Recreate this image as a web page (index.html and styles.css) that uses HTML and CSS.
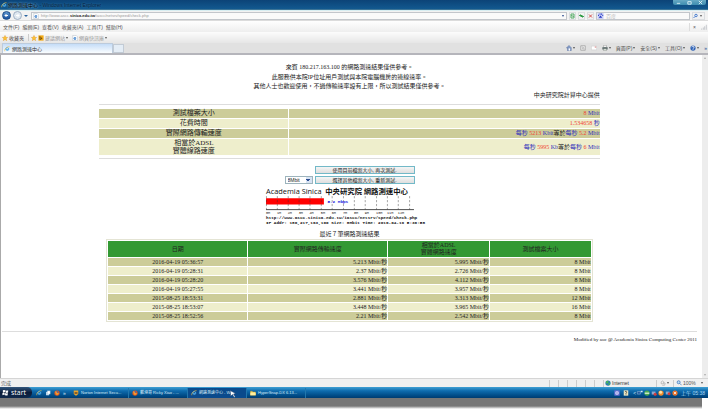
FILE: index.html
```html
<!DOCTYPE html>
<html lang="zh-Hant">

<head>
    <title>網路測速中心</title>
    <meta charset="utf-8">
    <meta name="viewport" content="width=device-width, initial-scale=1.0">
    <link rel="stylesheet" href="styles.css">
</head>

<body>
    <svg class="defs" aria-hidden="true">
        <symbol id="ie" viewBox="0 0 16 16">
            <path d="M13 9H5q1 3 4 3 2 0 3-1" fill="none" stroke="#4fabea" stroke-width="2.4" />
            <path d="M4 9q0-5 4.500-5Q13 4 13 9" fill="none" stroke="#4fabea" stroke-width="2.400" />
            <path d="M2 14Q0 10 6 5t9-3" fill="none" stroke="#f0c040" stroke-width="1.600" />
        </symbol>
        <symbol id="page" viewBox="0 0 16 16">
            <path d="M2 1h9l4 4v10H2z" fill="#fff" stroke="#9aa7b5" />
            <path d="M10 10H5q0-4 3-4t2 4M5 10q1 3 5 2" fill="none" stroke="#2f78c8" stroke-width="2" />
        </symbol>
        <symbol id="star" viewBox="0 0 16 16">
            <path d="M8 1l2 5 5 .5-4 3.500 1.500 5L8 12l-4.500 3L5 10 1 6.500 6 6z" fill="#ffc530" stroke="#d98a1a" />
        </symbol>
        <symbol id="firefox" viewBox="0 0 16 16">
            <circle cx="8" cy="8" r="7" fill="#e2541b" />
            <circle cx="8" cy="7" r="3.500" fill="#3d66b5" />
            <path d="M3 4q4-2 5 3l5 1q-1 5-5 5T3 4" fill="#f79a2c" />
        </symbol>
        <symbol id="folder" viewBox="0 0 16 16">
            <path d="M1 3h5l2 2h7v9H1z" fill="#f4d35c" stroke="#c79a2a" />
            <path d="M1 7h14v7H1z" fill="#fff0a0" />
        </symbol>
        <symbol id="bars" viewBox="0 0 16 16">
            <path d="M1 12h2v3H1zM5 9h2v6H5zM9 6h2v9H9zM13 2h2v13h-2z" fill="#b9bdc2" />
        </symbol>
    </svg>

    <div class="window">
        <header class="titlebar">
            <svg class="icon"><use href="#ie" /></svg>
            <span class="title">網路測速中心 <span class="app">- Windows Internet Explorer</span></span>
            <div class="controls">
                <button aria-label="最小化"><svg viewBox="0 0 10 6"><path d="M3 4h4" /></svg></button>
                <button aria-label="還原"><svg viewBox="0 0 10 6"><path d="M3 2h4v3H3z" /></svg></button>
                <button aria-label="關閉"><svg viewBox="0 0 10 6"><path d="M3 1l4 4M7 1L3 5" /></svg></button>
            </div>
        </header>

        <div class="addressbar">
            <button class="round back" aria-label="上一頁"><svg viewBox="0 0 10 10"><path d="M8 5H2M5 2L2 5l3 3" /></svg></button>
            <button class="round" aria-label="下一頁"><svg viewBox="0 0 10 10"><path d="M2 5h6M5 2l3 3-3 3" /></svg></button>
            <span class="caret big"></span>
            <div class="field address">
                <svg class="icon"><use href="#page" /></svg>
                <div class="url" role="textbox" aria-label="網址" contenteditable="true">http://www.ascc.<b>sinica.edu.tw</b>/iascc/netsrv/speed/check.php</div>
                <span class="caret"></span>
            </div>
            <button class="tool" aria-label="相容性檢視"><svg viewBox="0 0 10 10"><path d="M2 1h6v8H2zM2 4l6 2" stroke="#58ad6b" /></svg></button>
            <button class="tool" aria-label="重新整理"><svg viewBox="0 0 10 10"><path d="M1 4h5M3 2L1 4l2 2M4 6h5M7 4l2 2-2 2" stroke="#2e9b45" /></svg></button>
            <button class="tool" aria-label="停止"><svg viewBox="0 0 10 10"><path d="M2 2l6 6M8 2L2 8" stroke="#d45050" /></svg></button>
            <div class="field search">
                <svg class="paw" viewBox="0 0 10 10"><path d="M0 0h10v10H0z" fill="#c9cff5" /><path d="M5 4l3 4H2zM1 3h1.500v2H1zM3.500 1H5v2H3.500zM6 1h1.500v2H6zM8 3h1.500v2H8z" fill="#2638c4" /></svg>
                <input type="text" placeholder="百度" aria-label="搜尋">
            </div>
            <button class="tool go" aria-label="開始搜尋"><svg viewBox="0 0 10 10"><circle cx="6" cy="4" r="2.500" stroke="#4a7fd0" /><path d="M4 6L1 9" stroke="#4a7fd0" /></svg><span class="caret"></span></button>
        </div>

        <nav class="menubar">
            <a href="#">文件(F)</a>
            <a href="#">編輯(E)</a>
            <a href="#">查看(V)</a>
            <a href="#">收藏夾(A)</a>
            <a href="#">工具(T)</a>
            <a href="#">幫助(H)</a>
            <span class="menu-end">
                <button aria-label="關閉工具列">×</button>
                <svg class="icon"><use href="#bars" /></svg>
            </span>
        </nav>

        <nav class="favorites">
            <svg class="icon"><use href="#star" /></svg>
            <a class="dark" href="#">收藏夾</a>
            <span class="divider"></span>
            <svg class="icon"><use href="#star" /></svg>
            <svg class="icon" viewBox="0 0 16 16"><path d="M1 1h14v14H1z" fill="#f3ab16" /><path d="M5 3v9l6-3-4-2" fill="none" stroke="#50370a" stroke-width="2" /></svg>
            <a href="#">建議網站</a><span class="caret"></span>
            <svg class="icon second"><use href="#page" /></svg>
            <a href="#">網頁快訊庫</a><span class="caret"></span>
        </nav>

        <div class="tabbar">
            <a class="tab" href="#"><svg class="icon"><use href="#ie" /></svg>網路測速中心</a>
            <button class="newtab" aria-label="新索引標籤"></button>
            <div class="commands">
                <button aria-label="首頁"><svg class="icon" viewBox="0 0 16 16"><path d="M1 8l7-7 6 6v8H4V8z" fill="#8199c4" stroke="#415c91" /><path d="M7 9h4v6H7z" fill="#fff" /></svg><span class="caret"></span></button>
                <button aria-label="摘要"><svg class="icon" viewBox="0 0 16 16"><path d="M2 2h12v12H2z" fill="#eee" stroke="#888" stroke-width="1.500" /><path d="M5 5q6 0 6 7M5 8q3 0 3 4" fill="none" stroke="#999" stroke-width="1.500" /></svg></button>
                <button aria-label="郵件"><svg class="icon" viewBox="0 0 16 16"><path d="M1 3h14v10H1z" fill="#fff" stroke="#bbb" /><path d="M10 4h4v3h-4z" fill="#dd8c8c" /></svg></button>
                <button aria-label="列印"><svg class="icon" viewBox="0 0 16 16"><path d="M4 1h8v5H4z" fill="#fff" stroke="#777" /><path d="M1 6h14v6H1z" fill="#566" /><path d="M4 10h8v5H4z" fill="#dde8dd" stroke="#777" /></svg><span class="caret"></span></button>
                <button>頁面(P)<span class="caret"></span></button>
                <button>安全(S)<span class="caret"></span></button>
                <button>工具(O)<span class="caret"></span></button>
                <button aria-label="說明"><svg class="icon" viewBox="0 0 16 16"><circle cx="8" cy="8" r="7" fill="#2f62b5" /><path d="M5 6q0-3 3-3t3 3q0 2-3 3v1M8 11v2" fill="none" stroke="#fff" stroke-width="2" /></svg><span class="caret"></span></button>
                <button class="more" aria-label="更多">»</button>
            </div>
        </div>

        <div class="viewport">
            <main class="page">
                <p class="lead">來賓 180.217.163.100 的網路測速結果僅供參考。</p>
                <p>此服務供本院IP位址用戶測試與本院電腦機房的連線速率。</p>
                <p>其他人士也歡迎使用，不過傳輸速率設有上限，所以測試結果僅供參考。</p>
                <div class="result">
                    <p class="provider">中央研究院計算中心提供</p>
                    <hr>
                    <table class="summary">
                        <tr><th>測試檔案大小</th><td><em>8</em> Mbit</td></tr>
                        <tr><th>花費時間</th><td><em>1.534658</em> 秒</td></tr>
                        <tr><th>實際網路傳輸速度</th><td>每秒 <em>5213</em> Kbit<i>等於</i>每秒 <em>5.2</em> Mbit</td></tr>
                        <tr><th>相當於ADSL<br>實體線路速度</th><td>每秒 <em>5995</em> Kb<i>等於</i>每秒 <em>6</em> Mbit</td></tr>
                    </table>
                    <hr>
                </div>

                <form class="retest">
                    <button type="button" class="again">使用目前檔案大小, 再次測試.</button>
                    <select aria-label="檔案大小">
                        <option>8Mbit</option>
                        <option>12Mbit</option>
                        <option>16Mbit</option>
                    </select>
                    <button type="button">選擇其他檔案大小, 重新測試.</button>
                </form>

                <svg class="chart" viewBox="0 0 386 90">
                    <text class="chart-title" x="0" y="17">Academia Sinica</text>
                    <text class="chart-name" x="136" y="17">中央研究院 網路測速中心</text>
                    <path d="M0 26h133v14H0z" fill="#f00" />
                    <path class="ticks" d="M1 21v31M26 21v31M51 21v31M76 21v31M101 21v31M127 21v31M152 21v31M178 21v31M203 21v31M228 21v31M254 21v31M279 21v31M304 21v31M330 21v31" />
                    <path d="M0 52h340" stroke="#333" stroke-width="2" />
                    <text class="speed" x="141" y="37">5.2 Mbps</text>
                    <g class="scale">
                        <text x="0" y="62">0M</text>
                        <text x="25" y="62">1M</text>
                        <text x="50" y="62">2M</text>
                        <text x="75" y="62">3M</text>
                        <text x="100" y="62">4M</text>
                        <text x="126" y="62">5M</text>
                        <text x="151" y="62">6M</text>
                        <text x="177" y="62">7M</text>
                        <text x="202" y="62">8M</text>
                        <text x="227" y="62">9M</text>
                        <text x="253" y="62">10M</text>
                        <text x="278" y="62">11M</text>
                        <text x="303" y="62">12M</text>
                    </g>
                    <text class="mono" x="0" y="73">http://www.ascc.sinica.edu.tw/iascc/netsrv/speed/check.php</text>
                    <text class="mono" x="0" y="84">IP Addr: 180,217,163,100 Size: 8Mbit Time: 2016-04-19 5:36:58</text>
                </svg>

                <table class="history">
                    <caption>最近７筆網路測速結果</caption>
                    <thead>
                        <tr><th class="date">日期</th><th class="real">實際網路傳輸速度</th><th class="adsl">相當於ADSL<br>實體網路速度</th><th>測試檔案大小</th></tr>
                    </thead>
                    <tbody>
                        <tr><td>2016-04-19 05:36:57</td><td>5.213 Mbit/秒</td><td>5.995 Mbit/秒</td><td>8 Mbit</td></tr>
                        <tr><td>2016-04-19 05:28:31</td><td>2.37 Mbit/秒</td><td>2.726 Mbit/秒</td><td>8 Mbit</td></tr>
                        <tr><td>2016-04-19 05:28:20</td><td>3.576 Mbit/秒</td><td>4.112 Mbit/秒</td><td>8 Mbit</td></tr>
                        <tr><td>2016-04-19 05:27:55</td><td>3.441 Mbit/秒</td><td>3.957 Mbit/秒</td><td>8 Mbit</td></tr>
                        <tr><td>2015-08-25 18:53:31</td><td>2.881 Mbit/秒</td><td>3.313 Mbit/秒</td><td>12 Mbit</td></tr>
                        <tr><td>2015-08-25 18:53:07</td><td>3.448 Mbit/秒</td><td>3.965 Mbit/秒</td><td>16 Mbit</td></tr>
                        <tr><td>2015-08-25 18:52:56</td><td>2.21 Mbit/秒</td><td>2.542 Mbit/秒</td><td>8 Mbit</td></tr>
                    </tbody>
                </table>
                <hr class="end">
                <p class="footer">Modified by aoc @ Academia Sinica Computing Center 2011</p>
            </main>
            <div class="scrollbar"><span class="caret up"></span><span class="caret"></span></div>
        </div>

        <div class="statusbar">
            <span class="done">完成</span>
            <span class="cell"></span><span class="cell"></span><span class="cell"></span><span class="cell"></span><span class="cell"></span><span class="cell"></span>
            <span class="cell zone"><svg class="icon" viewBox="0 0 16 16"><circle cx="8" cy="8" r="7" fill="#2d7fb0" /><path d="M3 4q4-4 6 0t-3 5-3-5M10 8q4-1 4 2t-5 4z" fill="#49b45a" /></svg>Internet</span>
            <span class="cell guard"><svg class="icon" viewBox="0 0 16 16"><path d="M3 5q4-5 7 0v5H3zM10 7l4 2-2 5H6" fill="#eee" stroke="#777" /></svg><span class="caret"></span></span>
            <span class="cell zoom"><svg class="icon" viewBox="0 0 16 16"><circle cx="7" cy="6" r="4" fill="#bfe0f5" stroke="#3d72b8" stroke-width="2" /><path d="M10 9l5 5" stroke="#3d72b8" stroke-width="2" /></svg>100%<span class="caret"></span></span>
        </div>

        <footer class="taskbar">
            <button class="start"><svg class="flag" viewBox="0 0 16 16"><path d="M2 3q3-2 5 0v5q-2-2-5 0zM8 3q3 2 6 0v5q-3 2-6 0zM1 9q3-2 5 0v5q-2-2-5 0zM7 9q3 2 6 0v5q-3 2-6 0z" fill="#fff" /></svg>start</button>
            <div class="quick">
                <svg class="icon"><use href="#ie" /></svg>
                <svg class="icon" viewBox="0 0 16 16"><path d="M3 5h8v9H3z" fill="#dcecf8" /><path d="M6 2h8v9H6z" fill="#fff" stroke="#6a9dc5" /></svg>
                <svg class="icon"><use href="#firefox" /></svg>
                <span>»</span>
            </div>
            <button class="task"><svg class="icon" viewBox="0 0 16 16"><path d="M2 1h12v8q-1 4-6 6-5-2-6-6z" fill="#e8a32c" /><path d="M4 6h8v4H4z" fill="#634a32" /></svg>Norton Internet Secu...</button>
            <button class="task"><svg class="icon"><use href="#firefox" /></svg>戴港哥 Ricky Xiao - ...</button>
            <button class="task active"><svg class="icon"><use href="#ie" /></svg>網路測速中心 - Wi...</button>
            <button class="task"><svg class="icon"><use href="#folder" /></svg>HyperSnap-DX 6.13...</button>
            <svg class="cursor" viewBox="0 0 14 14"><path d="M2 1l10 5-4 1 3 5-2 1-3-5-3 3z" fill="#fff" stroke="#163d70" /></svg>
            <div class="tray">
                <svg class="icon" viewBox="0 0 16 16"><path d="M1 1h14v14H1z" fill="#6f70d8" /><path d="M5 11V5h6v6z" fill="none" stroke="#fff" stroke-width="2" /></svg>
                <svg class="icon help" viewBox="0 0 16 16"><path d="M2 1h12v14H2z" fill="#eee8c0" /><path d="M5 5q3-3 5 0 0 2-2 4v3" fill="none" stroke="#333" stroke-width="2" /></svg>
                <span>&lt;</span>
                <svg class="icon" viewBox="0 0 16 16"><path d="M1 4h8v7H1z" fill="#235ba0" stroke="#c9ddf0" /><path d="M10 2h5v4h-5z" fill="#dbe8f5" /></svg>
                <svg class="icon" viewBox="0 0 16 16"><circle cx="8" cy="8" r="7" fill="#4cab50" /><path d="M2 7h12v3H2z" fill="#eef8ee" /></svg>
                <svg class="icon" viewBox="0 0 16 16"><path d="M2 4h10v8H2z" fill="#8da7cc" /><circle cx="11" cy="11" r="4" fill="#d43c3c" /></svg>
                <svg class="icon" viewBox="0 0 16 16"><circle cx="8" cy="8" r="7" fill="#f08a2a" /><circle cx="7" cy="6" r="4" fill="#ffe3a6" /></svg>
                <svg class="icon" viewBox="0 0 16 16"><path d="M2 4h10v8H2z" fill="#8da7cc" /><circle cx="11" cy="10" r="4" fill="#d43c3c" /></svg>
                <svg class="icon" viewBox="0 0 16 16"><circle cx="8" cy="8" r="7" fill="#ee7428" /><path d="M5 5l6 6M11 5l-6 6" stroke="#fff" stroke-width="2" /></svg>
                <time>上午 05:38</time>
            </div>
        </footer>
    </div>
    <div class="shadow"></div>
</body>

</html>
```
FILE: styles.css
```css
* {
    box-sizing: border-box;
}

body {
    display: flex;
    flex-direction: column;
    min-height: 100vh;
    margin: 0;
    background: #fff;
    font-family: "Liberation Sans", "Noto Sans CJK TC", sans-serif;
    font-size: 5px;
    line-height: 8px;
    color: #555;
}

button,
input,
select {
    margin: 0;
    padding: 0;
    border: 0;
    background: none;
    font: inherit;
    color: inherit;
}

a {
    color: inherit;
    text-decoration: none;
}

p {
    margin: 0;
}

.defs {
    position: absolute;
    width: 0;
    height: 0;
}

.icon {
    flex: none;
    width: 6px;
    height: 6px;
}

.caret {
    flex: none;
    border: 1px solid transparent;
    border-top: 2px solid #555;
    border-bottom: 0;
}

.caret.big {
    border-width: 2px 2px 0;
    border-top-color: #2b65a0;
}

.window {
    display: flex;
    flex: 1;
    flex-direction: column;
    margin-right: 12px;
}

/* title */
.titlebar {
    display: flex;
    align-items: center;
    gap: 1px;
    height: 10px;
    padding-left: 1px;
    background: linear-gradient(#0c4377, #12598f);
    border-bottom: 1px solid #3d7496;
}

.title {
    font-size: 5px;
    color: #000;
    text-shadow: 0 0 2px #7fb4da, 0 0 3px #5b97c4;
}

.app {
    color: #04203c;
    text-shadow: 0 0 2px #4683b0;
}

.controls {
    display: flex;
    align-self: flex-start;
    margin-left: auto;
    margin-right: 2px;
    border-radius: 0 0 2px 2px;
    background: linear-gradient(#67a9c4, #3e8db0);
}

.controls button {
    display: flex;
    width: 11px;
    height: 5px;
}

.controls svg {
    width: 100%;
    height: 5px;
    fill: none;
    stroke: #e8f5fb;
}

/* address */
.addressbar {
    display: flex;
    align-items: center;
    gap: 2px;
    height: 11px;
    padding: 0 3px 0 2px;
    background: #f2f2f2;
    border-top: 1px solid #d8eef2;
    border-bottom: 1px solid #dcdcdc;
}

.round {
    display: flex;
    width: 9px;
    height: 9px;
    padding: 1px;
    border: 1px solid #9fb0c4;
    border-radius: 50%;
    background: #dfe8f0;
}

.round svg {
    width: 100%;
    fill: none;
    stroke: #fff;
    stroke-width: 2;
}

.round.back {
    border-color: #1c4c88;
    background: linear-gradient(#5f97d0, #164f9e);
}

.field {
    display: flex;
    align-items: center;
    gap: 2px;
    height: 8px;
    border: 1px solid #c2c6cb;
    background: #fafafa;
}

.address {
    flex: 1;
    margin-left: 1px;
    padding: 0 2px 0 1px;
}

.address .caret {
    border-top-color: #2b4c90;
}

.url {
    flex: 1;
    font-size: 4px;
    line-height: 6px;
    color: #999;
}

.url b {
    color: #222;
}

.tool {
    display: flex;
    align-items: center;
    gap: 2px;
    width: 7px;
    height: 8px;
    border: 1px solid #dadde0;
}

.tool svg {
    width: 5px;
    height: 6px;
    fill: none;
    stroke-width: 2;
}

.search {
    width: 94px;
}

.paw {
    width: 7px;
    height: 6px;
}

.search input {
    flex: 1;
    width: 0;
    height: 6px;
}

.search input::placeholder {
    color: #bbb;
}

.go {
    width: 13px;
}

/* menu */
.menubar {
    display: flex;
    align-items: center;
    gap: 3px;
    height: 11px;
    padding-left: 3px;
    background: linear-gradient(#fff, #eee);
}

.menu-end {
    display: flex;
    align-items: center;
    gap: 5px;
    margin-left: auto;
    padding: 0 1px 0 3px;
    border-left: 1px solid #ddd;
}

.favorites {
    display: flex;
    align-items: center;
    gap: 1px;
    height: 11px;
    padding-left: 2px;
    background: linear-gradient(#fcfcfc, #e6e6e6);
    color: #999;
}

.favorites .dark {
    color: #444;
}

.divider {
    height: 7px;
    margin: 0 1px 0 3px;
    border-left: 1px solid #ccc;
}

.second {
    margin-left: 3px;
}

.tabbar {
    display: flex;
    align-items: center;
    height: 12px;
    padding-left: 2px;
    background: #e1e1e1;
    border-bottom: 2px solid #b5b5bb;
}

.tab {
    display: flex;
    align-items: center;
    gap: 2px;
    width: 111px;
    height: 10px;
    padding-left: 1px;
    border: 1px solid #bccbdc;
    border-bottom: 0;
    background: linear-gradient(#c5ddf8, #fafdff);
    color: #333;
}

.newtab {
    align-self: flex-end;
    width: 11px;
    height: 9px;
    border: 1px solid #c2cbd5;
    background: #e4edf6;
}

.commands {
    display: flex;
    align-items: center;
    gap: 5px;
    margin-left: auto;
    padding-right: 1px;
}

.commands button {
    display: flex;
    align-items: center;
    gap: 1px;
}

.more {
    color: #2b4c90;
}

/* content */
.viewport {
    display: flex;
    flex: 1;
    background: #fff;
}

.page {
    flex: 1;
    padding: 8px 5px 0 1px;
    border-left: 1px solid #aaa;
    font-family: "Liberation Serif", "Noto Sans CJK TC", serif;
    font-size: 6px;
    line-height: 9px;
    text-align: center;
    color: #222;
}

.page .lead {
    padding-bottom: 1px;
}

.scrollbar {
    display: flex;
    flex-direction: column;
    justify-content: space-between;
    align-items: center;
    width: 6px;
    padding: 2px 0;
    background: #ededed;
}

.scrollbar .caret {
    border-top-color: #aaa;
}

.scrollbar .up {
    rotate: 180deg;
}

hr {
    height: 1px;
    margin: 0;
    border: 0;
    background: #ddd;
}

.result {
    width: 72%;
    margin: 0 auto;
}

.provider {
    padding-bottom: 4px;
    text-align: right;
}

.summary {
    width: 100%;
    margin: 3px 0 2px;
    border-spacing: 0 1px;
    line-height: 9px;
}

.summary th,
.summary td {
    padding: 0;
    background: #cccc99;
}

.summary th {
    width: 38%;
    border-right: 1px solid #fff;
    font-size: 7px;
    font-weight: normal;
}

.summary tr:nth-child(even) > * {
    background: #eeeecc;
}

.summary tr:last-child th {
    line-height: 8px;
}

.summary td {
    text-align: right;
    color: #33b;
}

.summary em {
    font-style: normal;
    color: #e43;
}

.summary i {
    font-style: normal;
    color: #222;
}

.retest {
    display: grid;
    grid-template-columns: 28px 100px;
    justify-content: center;
    gap: 2px;
    margin: 7px 0 3px;
}

.retest button,
.retest select {
    height: 8px;
    border: 1px solid #9db4bd;
    background: #eee;
    font-family: "Liberation Sans", "Noto Sans CJK TC", sans-serif;
    font-size: 5px;
    line-height: 6px;
    color: #222;
}

.retest button {
    border-color: #72b9c8;
    background: linear-gradient(#f5f5f5, #dedede);
}

.again {
    grid-column: 2;
}

.retest select {
    appearance: none;
    padding-left: 2px;
    background: conic-gradient(from -45deg at 50% 100%, #2b4c90 90deg, transparent 0) right 2px top 2px / 4px 2px no-repeat, linear-gradient(to right, #fff 20px, #d7e3f3 20px);
}

.chart {
    display: block;
    width: 168px;
    margin: 0 auto;
    overflow: visible;
    fill: #111;
}

.chart-title {
    font: 17px "Open Sans", sans-serif;
}

.chart-name {
    font: bold 17px "Noto Sans CJK TC", sans-serif;
}

.ticks {
    fill: none;
    stroke: #333;
    stroke-width: 1;
    stroke-dasharray: 5 4;
}

.speed,
.mono {
    font: bold 10px "Liberation Mono", monospace;
}

.speed {
    fill: #22d;
}

.scale {
    font: 8px "Liberation Mono", monospace;
}

.history {
    width: 70%;
    margin: 4px auto 0;
    border: 1px solid #e4e4d4;
    border-spacing: 1px;
    table-layout: fixed;
    line-height: 8px;
}

.history caption {
    padding-bottom: 1px;
}

.history th,
.history td {
    padding: 0;
}

.history th {
    height: 16px;
    background: #339933;
    font-weight: normal;
    line-height: 7px;
}

.date {
    width: 29%;
}

.real {
    width: 29%;
}

.adsl {
    width: 21%;
}

.history td {
    background: #eeeecc;
    text-align: right;
}

.history tr:nth-child(odd) td {
    background: #cccc99;
}

.history .date,
.history .real,
.history .adsl,
.history tr th {
    background: #339933;
}

.history td:first-child {
    text-align: center;
}

.end {
    margin: 9px 0 3px;
}

.footer {
    font-size: 5px;
    text-align: right;
}

/* status and task bar */
.statusbar {
    display: flex;
    align-items: center;
    height: 9px;
    padding-left: 1px;
    background: #f0f0f0;
    border-top: 1px solid #d5d5d5;
}

.done {
    flex: 1;
}

.cell {
    display: flex;
    align-items: center;
    gap: 1px;
    width: 9px;
    height: 7px;
    padding-left: 1px;
    border-left: 1px solid #ccc;
}

.zone {
    width: 53px;
    color: #333;
}

.guard {
    width: 17px;
    padding-left: 3px;
}

.zoom {
    width: 35px;
    padding-left: 2px;
}

.zoom .caret {
    margin-left: 4px;
}

.taskbar {
    display: flex;
    align-items: center;
    height: 11px;
    background: linear-gradient(#3fa0d4, #0f6cae 35%, #004a85 80%, #003c70);
    color: #d9ecf8;
}

.start {
    display: flex;
    align-items: center;
    gap: 2px;
    width: 32px;
    height: 11px;
    padding-left: 2px;
    border-radius: 0 5px 5px 0;
    background: linear-gradient(#33567d, #0a1c3a 50%, #10294c);
    font-family: "Open Sans", sans-serif;
    font-size: 7px;
    color: #fff;
}

.flag {
    width: 7px;
    height: 7px;
}

.quick {
    display: flex;
    gap: 3px;
    width: 38px;
    padding-left: 4px;
    align-items: center;
}

.quick span {
    line-height: 6px;
}

.task {
    display: flex;
    align-items: center;
    gap: 2px;
    width: 59px;
    height: 10px;
    padding-left: 3px;
    border-right: 1px solid #2277ad;
    font-size: 4px;
    white-space: nowrap;
}

.task.active {
    background: #0a4a8c;
}

.cursor {
    position: absolute;
    left: 229px;
    bottom: 12px;
    width: 8px;
    height: 8px;
}

.tray {
    display: flex;
    align-items: center;
    gap: 1px;
    margin-left: auto;
    padding-right: 3px;
}

.help {
    margin: 0 3px 0 2px;
}

.tray time {
    margin-left: 2px;
    color: #a8d8f5;
}

.shadow {
    height: 12px;
    margin-right: 18px;
    background: linear-gradient(#777 8px, #fff 11px);
}
```
